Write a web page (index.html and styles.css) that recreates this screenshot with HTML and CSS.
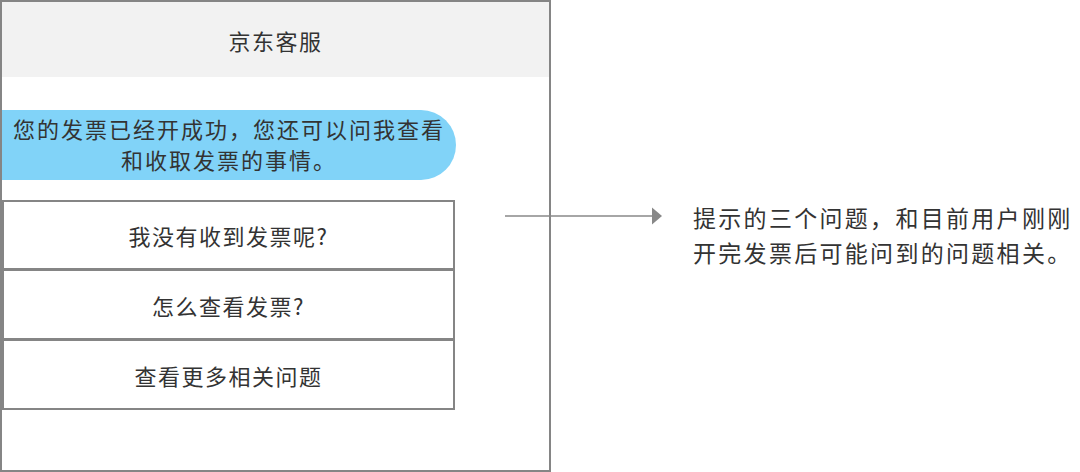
FILE: index.html
```html
<!DOCTYPE html>
<html lang="zh-CN">
<head>
    <meta charset="UTF-8">
    <meta name="viewport" content="width=device-width, initial-scale=1.0">
    <title>京东客服</title>
    <link rel="stylesheet" href="styles.css">
</head>
<body>
    <div class="board">
        <div class="phone">
            <div class="phone-header">京东客服</div>
            <div class="bubble">您的发票已经开成功，您还可以问我查看<br>和收取发票的事情。</div>
            <div class="suggestions">
                <div class="suggestion">我没有收到发票呢?</div>
                <div class="suggestion">怎么查看发票?</div>
                <div class="suggestion">查看更多相关问题</div>
            </div>
        </div>

        <div class="note">
            <svg class="note-arrow" width="157" height="20" viewBox="0 0 157 20">
                <line x1="0" y1="10" x2="148" y2="10" stroke="#888" stroke-width="1.5"/>
                <polygon points="147,1.5 157,10 147,18.5" fill="#888"/>
            </svg>
            <p class="note-text">提示的三个问题，和目前用户刚刚<br>开完发票后可能问到的问题相关。</p>
        </div>
    </div>
</body>
</html>
```

FILE: styles.css
```css
body {
    margin: 0;
    font-family: "Noto Sans CJK SC", "Noto Sans", sans-serif;
    background-color: #fff;
    color: #333;
}

.board {
    display: flex;
    align-items: flex-start;
    width: 1080px;
    height: 472px;
}

.phone {
    flex: none;
    width: 551px;
    height: 472px;
    box-sizing: border-box;
    border: 2px solid #858585;
    background-color: #fff;
}

.phone-header {
    height: 75px;
    background-color: #f2f2f2;
    display: flex;
    justify-content: center;
    align-items: center;
    font-size: 22px;
    letter-spacing: 1.5px;
}

.bubble {
    width: 454px;
    height: 70px;
    margin-top: 33px;
    box-sizing: border-box;
    padding-top: 3px;
    background-color: #81d3f8;
    border-radius: 0 35px 35px 0;
    text-align: center;
    font-size: 22px;
    line-height: 31px;
    letter-spacing: 2px;
}

.suggestions {
    margin-top: 20px;
    width: 453px;
}

.suggestion {
    height: 70px;
    box-sizing: border-box;
    border: 2px solid #858585;
    display: flex;
    justify-content: center;
    align-items: center;
    font-size: 22px;
    letter-spacing: 1.5px;
}

.suggestion + .suggestion {
    border-top-width: 1px;
}

.note {
    display: flex;
    align-items: flex-start;
    margin-left: -46px;
    margin-top: 200px;
}

.note-arrow {
    flex: none;
    margin-top: 6px;
}

.note-text {
    margin: 0 0 0 31px;
    font-size: 23px;
    line-height: 35px;
    letter-spacing: 2.3px;
    white-space: nowrap;
}
```
